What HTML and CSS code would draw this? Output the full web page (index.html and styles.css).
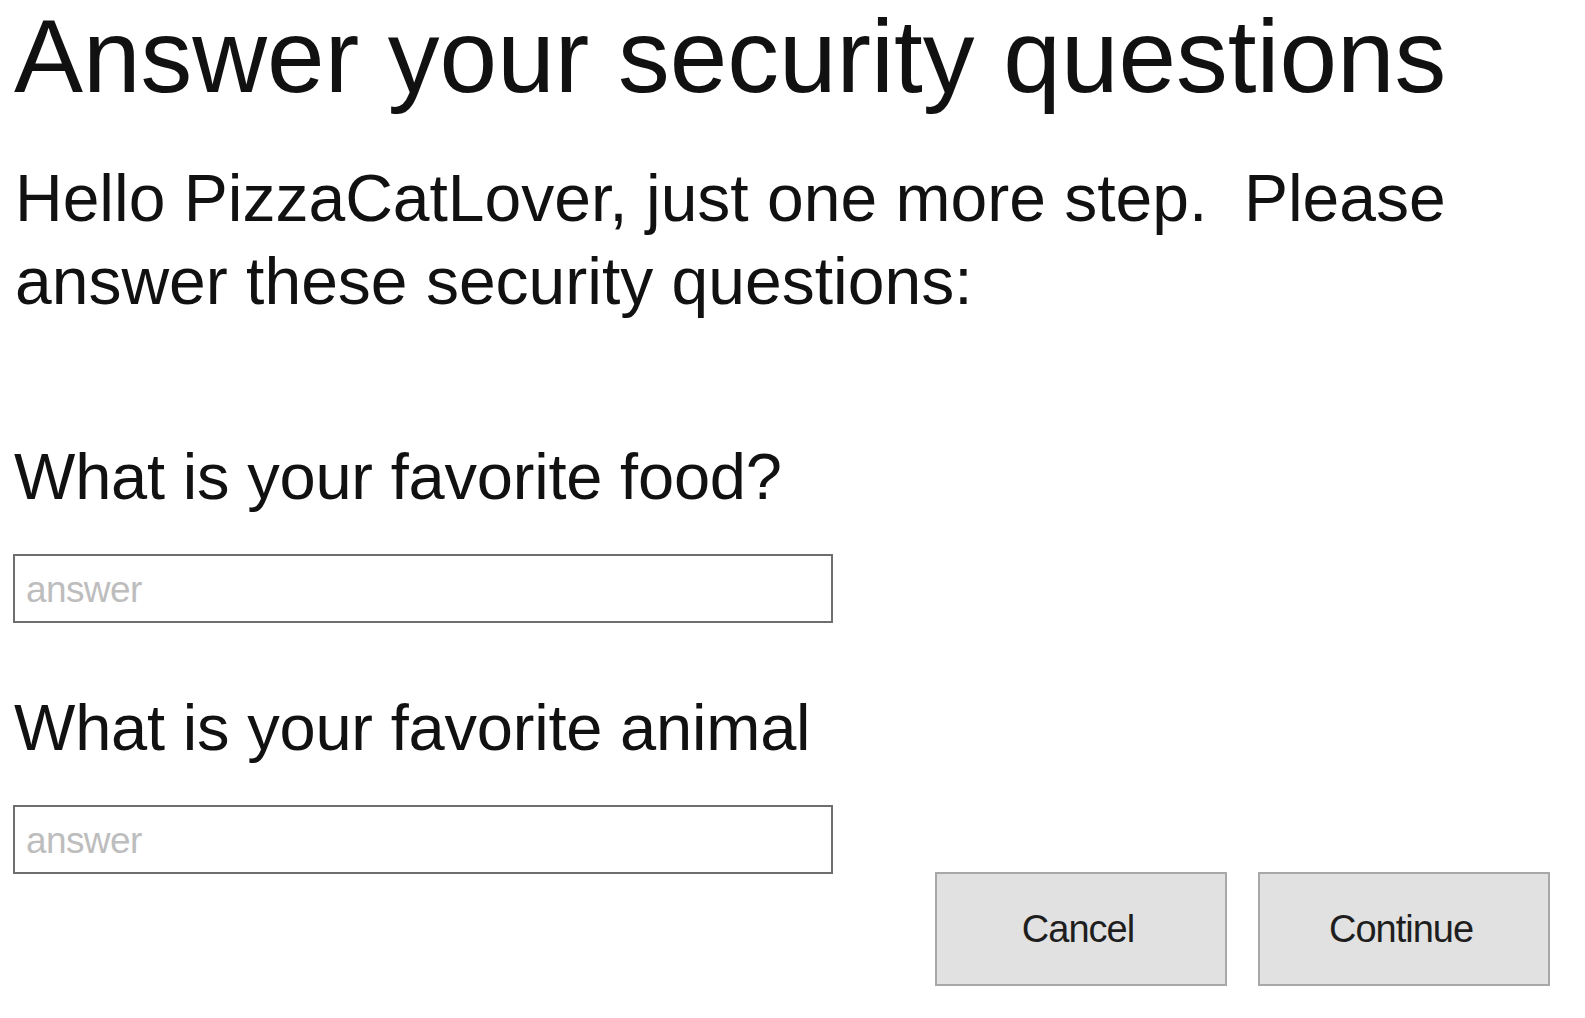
FILE: index.html
```html
<!DOCTYPE html>
<html lang="en">
<head>
<meta charset="utf-8">
<title>Answer your security questions</title>
<link rel="stylesheet" href="styles.css">
</head>
<body>
<main class="page">
  <h1 class="title">Answer your security questions</h1>
  <p class="intro">Hello PizzaCatLover, just one more step.&nbsp; Please answer these security questions:</p>
  <form class="form">
    <div class="field">
      <label class="question" for="q1">What is your favorite food?</label>
      <input class="answer" id="q1" type="text" placeholder="answer">
    </div>
    <div class="field">
      <label class="question" for="q2">What is your favorite animal</label>
      <input class="answer" id="q2" type="text" placeholder="answer">
    </div>
    <div class="actions">
      <button type="button" class="btn">Cancel</button>
      <button type="submit" class="btn">Continue</button>
    </div>
  </form>
</main>
</body>
</html>
```

FILE: styles.css
```css
html, body {
  margin: 0;
  padding: 0;
  background: #ffffff;
}

body {
  font-family: "Liberation Sans", Arial, sans-serif;
  color: #111111;
}

.page {
  padding: 0 35px 0 14px;
}

.title {
  margin: 0;
  font-size: 103.5px;
  font-weight: normal;
  line-height: 112px;
  white-space: nowrap;
}

.intro {
  margin: 45px 0 0 1px;
  font-size: 66px;
  line-height: 83px;
  max-width: 1460px;
}

.form {
  margin-top: 114px;
  display: flex;
  flex-direction: column;
}

.field {
  display: flex;
  flex-direction: column;
  align-items: flex-start;
}

.field + .field {
  margin-top: 65px;
}

.question {
  font-size: 65px;
  line-height: 80px;
  letter-spacing: -0.2px;
  white-space: nowrap;
}

.answer {
  margin: 37px 0 0 -1px;
  box-sizing: border-box;
  width: 820px;
  height: 69px;
  border: 2px solid #6e6e6e;
  border-radius: 0;
  padding: 2px 0 0 11px;
  font-family: "Liberation Sans", Arial, sans-serif;
  font-size: 37px;
  color: #222222;
  background: #ffffff;
  outline: none;
}

.answer::placeholder {
  color: #bdbdbd;
  letter-spacing: -0.6px;
}

.actions {
  display: flex;
  justify-content: flex-end;
  gap: 31px;
  margin-top: -2px;
}

.btn {
  box-sizing: border-box;
  width: 292px;
  height: 114px;
  margin: 0;
  border: 2px solid #a8a8a8;
  border-radius: 0;
  background: #e1e1e1;
  color: #1e1e1e;
  font-family: "Liberation Sans", Arial, sans-serif;
  font-size: 38px;
  letter-spacing: -1px;
  padding: 0 6px 0 0;
}
```
